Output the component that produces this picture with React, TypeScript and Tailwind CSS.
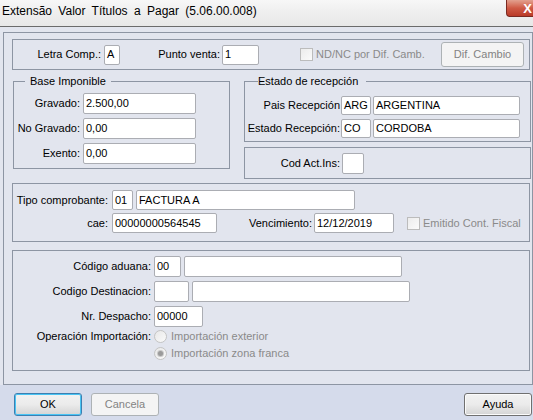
import React from 'react';

function Field({ className, value }: { className: string; value?: string }) {
  return (
    <div
      className={`bg-white border border-[#abadb3] rounded-[2px] pl-[2px] flex items-center leading-none shrink-0 ${className}`}
    >
      {value}
    </div>
  );
}

function Label({ className, children }: { className: string; children: React.ReactNode }) {
  return <div className={`text-right shrink-0 leading-none whitespace-nowrap ${className}`}>{children}</div>;
}

function Check({ className = '' }: { className?: string }) {
  return (
    <div
      className={`w-[13px] h-[13px] border border-[#bcbcbc] bg-gradient-to-br from-[#ececec] to-[#fbfbfb] shrink-0 ${className}`}
    />
  );
}

function Radio({ checked }: { checked?: boolean }) {
  return (
    <div className="w-[13px] h-[13px] rounded-full border border-[#c4c4c4] bg-gradient-to-br from-[#e8e8e8] to-[#fafafa] flex items-center justify-center shrink-0">
      {checked && <div className="w-[5px] h-[5px] rounded-full bg-[#9a9a9a] ring-1 ring-[#c9c9c9]" />}
    </div>
  );
}

function Button({
  children,
  className = '',
  disabled,
  focused,
}: {
  children: React.ReactNode;
  className?: string;
  disabled?: boolean;
  focused?: boolean;
}) {
  const look = disabled
    ? 'border-[#adb2b5] bg-[#f4f4f4] text-[#838383]'
    : focused
      ? 'border-[#3c7fb1] bg-gradient-to-b from-[#f2f2f2] via-[#ebebeb] to-[#d4d4d4] shadow-[inset_0_0_0_1px_#48c4f4] text-black'
      : 'border-[#707070] bg-gradient-to-b from-[#f2f2f2] via-[#ebebeb] to-[#d4d4d4] shadow-[inset_0_0_0_1px_#fbfbfb] text-black';
  return (
    <div className={`flex items-center justify-center border rounded-[3px] shrink-0 leading-none ${look} ${className}`}>
      {children}
    </div>
  );
}

export default function App() {
  return (
    <div className="w-[533px] h-[420px] overflow-hidden bg-[#e2e5ee] text-black text-[11px] font-['Liberation_Sans',Arial,sans-serif] flex flex-col">
      {/* window caption */}
      <div className="h-[27px] shrink-0 border-b border-[#6b6b6b] bg-gradient-to-b from-[#f7f7f7] via-[#eeeeee] to-[#e8e8e8] flex items-start justify-between">
        <div className="pl-[2px] pt-[4px] text-[12px] [word-spacing:3px] leading-[14px]">
          Extensão Valor Títulos a Pagar (5.06.00.008)
        </div>
        <div className="w-[27px] h-[17px] rounded-bl-[4px] border border-t-0 border-r-0 border-[#7a2a22] bg-gradient-to-b from-[#e2a08f] via-[#cf5a45] to-[#b93a28] flex items-center justify-end pr-[1px] text-white text-[13px] font-bold leading-none">
          X
        </div>
      </div>

      {/* main panel */}
      <div className="mt-[5px] ml-[3px] w-[530px] h-[353px] shrink-0 border border-[#8d95a3] pl-[8px] pt-[6px]">
        {/* letra / punto de venta */}
        <div className="w-[518px] h-[31px] border border-[#8d95a3] flex items-center">
          <Label className="w-[88px]">Letra Comp.:</Label>
          <Field className="ml-[3px] w-[16px] h-[20px]" value="A" />
          <Label className="w-[100px]">Punto venta:</Label>
          <Field className="ml-[2px] w-[37px] h-[20px]" value="1" />
          <Check className="ml-[41px]" />
          <span className="ml-[3px] text-[#8a8a8a] leading-none">ND/NC por Dif. Camb.</span>
          <Button disabled className="ml-auto mr-[5px] w-[83px] h-[25px]">
            Dif. Cambio
          </Button>
        </div>

        <div className="flex items-start mt-[11px]">
          {/* base imponible */}
          <div className="relative ml-[1px] w-[217px] h-[88px] border border-[#8d95a3] pt-[11px] flex flex-col gap-[4px]">
            <span className="absolute left-[11px] -top-[7px] px-[5px] bg-[#e2e5ee] leading-[13px]">Base Imponible</span>
            <div className="flex items-center">
              <Label className="w-[66px]">Gravado:</Label>
              <Field className="ml-[3px] w-[113px] h-[21px]" value="2.500,00" />
            </div>
            <div className="flex items-center">
              <Label className="w-[66px]">No Gravado:</Label>
              <Field className="ml-[3px] w-[113px] h-[21px]" value="0,00" />
            </div>
            <div className="flex items-center">
              <Label className="w-[66px]">Exento:</Label>
              <Field className="ml-[3px] w-[113px] h-[21px]" value="0,00" />
            </div>
          </div>

          <div className="ml-[14px] flex flex-col">
            {/* estado de recepcion */}
            <div className="relative w-[287px] h-[61px] border border-[#8d95a3] pt-[14px] flex flex-col gap-[4px]">
              <span className="absolute left-[13px] -top-[7px] pr-[8px] bg-[#e2e5ee] leading-[13px]">Estado de recepción</span>
              <div className="flex items-center">
                <Label className="w-[95px]">Pais Recepción</Label>
                <Field className="ml-[1px] w-[30px] h-[19px]" value="ARG" />
                <Field className="ml-[2px] w-[147px] h-[19px]" value="ARGENTINA" />
              </div>
              <div className="flex items-center">
                <Label className="w-[95px]">Estado Recepción:</Label>
                <Field className="ml-[1px] w-[30px] h-[19px]" value="CO" />
                <Field className="ml-[2px] w-[147px] h-[19px]" value="CORDOBA" />
              </div>
            </div>

            <div className="mt-[5px] w-[287px] h-[32px] border border-[#8d95a3] flex items-center">
              <Label className="w-[95px]">Cod Act.Ins:</Label>
              <Field className="ml-[2px] w-[22px] h-[21px]" />
            </div>
          </div>
        </div>

        {/* comprobante */}
        <div className="mt-[4px] w-[518px] h-[59px] border border-[#8d95a3] pt-[6px] flex flex-col gap-[3px]">
          <div className="flex items-center">
            <Label className="w-[95px]">Tipo comprobante:</Label>
            <Field className="ml-[4px] w-[21px] h-[20px]" value="01" />
            <Field className="ml-[3px] w-[219px] h-[20px]" value="FACTURA A" />
          </div>
          <div className="flex items-center">
            <Label className="w-[95px]">cae:</Label>
            <Field className="ml-[4px] w-[105px] h-[20px]" value="00000000564545" />
            <Label className="w-[95px]">Vencimiento:</Label>
            <Field className="ml-[2px] w-[80px] h-[20px]" value="12/12/2019" />
            <Check className="ml-[13px]" />
            <span className="ml-[3px] text-[#8a8a8a] leading-none">Emitido Cont. Fiscal</span>
          </div>
        </div>

        {/* aduana */}
        <div className="mt-[8px] w-[518px] h-[121px] border border-[#8d95a3] pt-[5px] flex flex-col">
          <div className="flex flex-col gap-[4px]">
            <div className="flex items-center">
              <Label className="w-[138px]">Código aduana:</Label>
              <Field className="ml-[3px] w-[27px] h-[21px]" value="00" />
              <Field className="ml-[3px] w-[218px] h-[21px]" />
            </div>
            <div className="flex items-center">
              <Label className="w-[138px]">Codigo Destinacion:</Label>
              <Field className="ml-[3px] w-[35px] h-[21px]" />
              <Field className="ml-[3px] w-[218px] h-[21px]" />
            </div>
            <div className="flex items-center">
              <Label className="w-[138px]">Nr. Despacho:</Label>
              <Field className="ml-[3px] w-[49px] h-[21px]" value="00000" />
            </div>
          </div>
          <div className="mt-[1px] flex items-center h-[17px]">
            <Label className="w-[138px]">Operación Importación:</Label>
            <div className="ml-[3px]">
              <Radio />
            </div>
            <span className="ml-[4px] text-[#8a8a8a] leading-none">Importación exterior</span>
          </div>
          <div className="flex items-center h-[17px]">
            <div className="ml-[141px]">
              <Radio checked />
            </div>
            <span className="ml-[4px] text-[#8a8a8a] leading-none">Importación zona franca</span>
          </div>
        </div>
      </div>

      {/* dialog buttons */}
      <div className="flex-1 bg-[#d5dbeb] flex items-start pt-[8px] pl-[14px]">
        <Button focused className="w-[68px] h-[23px]">
          OK
        </Button>
        <Button disabled className="ml-[9px] w-[68px] h-[23px]">
          Cancela
        </Button>
        <Button className="ml-auto mr-[1px] w-[68px] h-[23px]">Ayuda</Button>
      </div>
    </div>
  );
}
